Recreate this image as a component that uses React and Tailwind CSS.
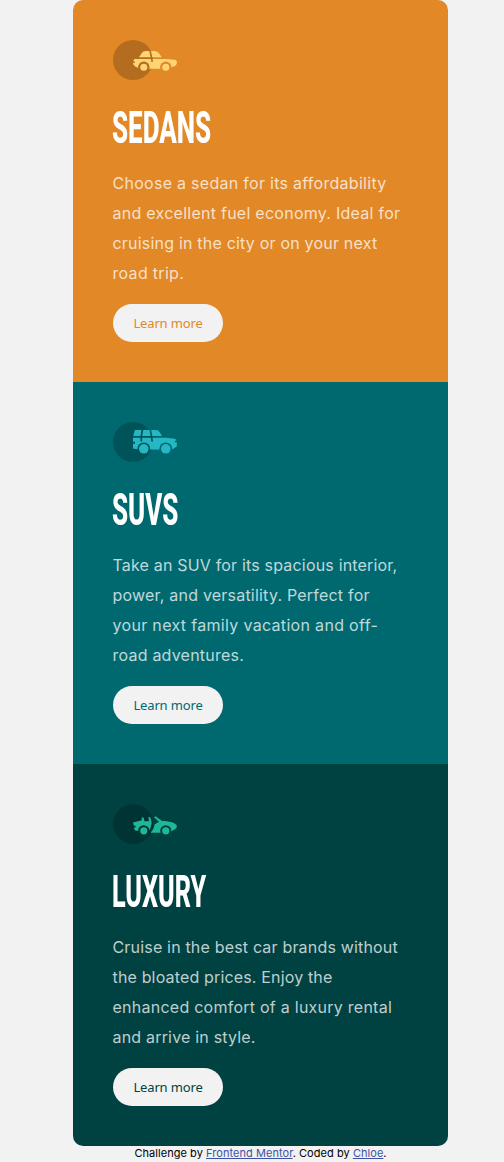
import React from "react";

const wheels = {
  sedan: { y: 27.3, r: 3.5, gap: 5.7 },
  suv: { y: 26.8, r: 4.8, gap: 6.4 },
  luxury: { y: 26.8, r: 3.6, gap: 5.6 },
};

function Icon({ kind, color }) {
  const w = wheels[kind];
  return (
    <svg width="64" height="40" viewBox="0 0 64 40" className="block">
      <defs>
        <mask id={`gaps-${kind}`} maskUnits="userSpaceOnUse" x="0" y="0" width="64" height="40">
          <rect width="64" height="40" fill="white" />
          <circle cx="30.8" cy={w.y} r={w.gap} fill="black" />
          <circle cx="52.8" cy={w.y} r={w.gap} fill="black" />
          {kind === "sedan" && (
            <path d="M37 10.5L38.5 17.5L39.2 21.8" fill="none" stroke="black" strokeWidth="1.7" />
          )}
          {kind === "suv" && (
            <path d="M37.2 7L38.5 14L39.2 19.5M29.6 7L28.3 14V19.5" fill="none" stroke="black" strokeWidth="1.7" />
          )}
        </mask>
      </defs>
      <circle cx="20" cy="20" r="20" fill="black" fillOpacity="0.2" />
      <g fill={color}>
        <g mask={`url(#gaps-${kind})`}>
          {kind === "sedan" && (
            <>
              <path d="M26 17.2L28.8 13.1Q30 11 33 11H41.5Q44.5 11 46.2 13.6L48.8 17.2Z" />
              <path d="M21.2 19H49C54 19 60 19.4 62.8 20.1Q64.5 21.5 63.6 24Q63 26.4 59 27L57 28.8H26.5L21.5 26L20.2 24V22.7H22V21.5H20.2Z" />
            </>
          )}
          {kind === "suv" && (
            <>
              <path d="M20.2 14.1L22 8H43Q45.5 8 46.6 10L49 14.1Z" />
              <path d="M20 15.8H49C55 15.8 60 16.4 62.5 17L63.5 18.7H61.8V20.3H63.8V24.5L59 27.6H25.5L20 26.5V21.8H22V19.8H20Z" />
            </>
          )}
          {kind === "luxury" && (
            <>
              <path d="M20 18.6L28.9 16.3L28.5 13.6H30.6L31.4 17.3H36.2L35.2 13.4L37 13L38 15.5L38.7 19L37.5 24L35.8 27H25.5L22 26.4L20.7 23.5H22.6V21.8H21Z" />
              <path d="M41 13.2L42.6 12.2L49 17C56 17 62.5 18.5 64 21.8L63.2 24.5L59 27L56 28.8H37.7Q41 25.5 41.8 20.3L46 17.8Z" />
            </>
          )}
        </g>
        <circle cx="30.8" cy={w.y} r={w.r} />
        <circle cx="52.8" cy={w.y} r={w.r} />
      </g>
    </svg>
  );
}

const cards = [
  {
    kind: "sedan", title: "SEDANS", bg: "bg-[#e28826]", text: "text-[#e28826]", icon: "#ffd473",
    scale: "scale-x-[0.577]",
    lines: [
      ["Choose a sedan for its affordability", "tracking-[0.28px]"],
      ["and excellent fuel economy. Ideal for", "tracking-[0.26px]"],
      ["cruising in the city or on your next", "tracking-[0.2px]"],
      ["road trip.", "tracking-[0.3px]"],
    ],
  },
  {
    kind: "suv", title: "SUVS", bg: "bg-[#006970]", text: "text-[#006970]", icon: "#26b7c5",
    scale: "scale-x-[0.577]",
    lines: [
      ["Take an SUV for its spacious interior,", "tracking-[0.18px]"],
      ["power, and versatility. Perfect for", "tracking-[0.21px]"],
      ["your next family vacation and off-", "tracking-[0.32px]"],
      ["road adventures.", "tracking-[0.22px]"],
    ],
  },
  {
    kind: "luxury", title: "LUXURY", bg: "bg-[#004241]", text: "text-[#004241]", icon: "#1eb898",
    scale: "scale-x-[0.56]",
    lines: [
      ["Cruise in the best car brands without", "tracking-[0.18px]"],
      ["the bloated prices. Enjoy the", "tracking-[0.16px]"],
      ["enhanced comfort of a luxury rental", "tracking-[0.25px]"],
      ["and arrive in style.", "tracking-[0.19px]"],
    ],
  },
];

export default function App() {
  return (
    <div className="h-[1162px] overflow-hidden bg-[#f2f2f2] pl-[73px] font-['Inter',sans-serif]">
      <main className="w-[375px] overflow-hidden rounded-[10px]">
        {cards.map((c) => (
          <section key={c.kind} className={`h-[382px] p-10 ${c.bg}`}>
            <Icon kind={c.kind} color={c.icon} />
            <h1 className={`mt-[23px] -ml-px h-[50px] w-max origin-left font-['Roboto',sans-serif] text-[45px] leading-[50px] font-extrabold text-white ${c.scale}`}>
              {c.title}
            </h1>
            <p className="mt-[15px] -ml-[0.5px] text-[16px] leading-[30px] whitespace-nowrap text-white/75">
              {c.lines.map(([line, tracking]) => (
                <span key={line} className={`block w-max ${tracking}`}>{line}</span>
              ))}
            </p>
            <button className={`mt-4 block h-[38px] w-[110px] rounded-[25px] bg-[#f2f2f2] pt-[2px] font-['Noto_Sans',sans-serif] text-[13px] tracking-[-0.15px] ${c.text}`}>
              Learn more
            </button>
          </section>
        ))}
      </main>
      <footer className="w-[375px] text-center text-[11px] leading-[14px] tracking-[0.05px] text-black">
        Challenge by <a className="text-[#3e52a3] underline">Frontend Mentor</a>. Coded by{" "}
        <a className="text-[#3e52a3] underline">Chloe</a>.
      </footer>
    </div>
  );
}
